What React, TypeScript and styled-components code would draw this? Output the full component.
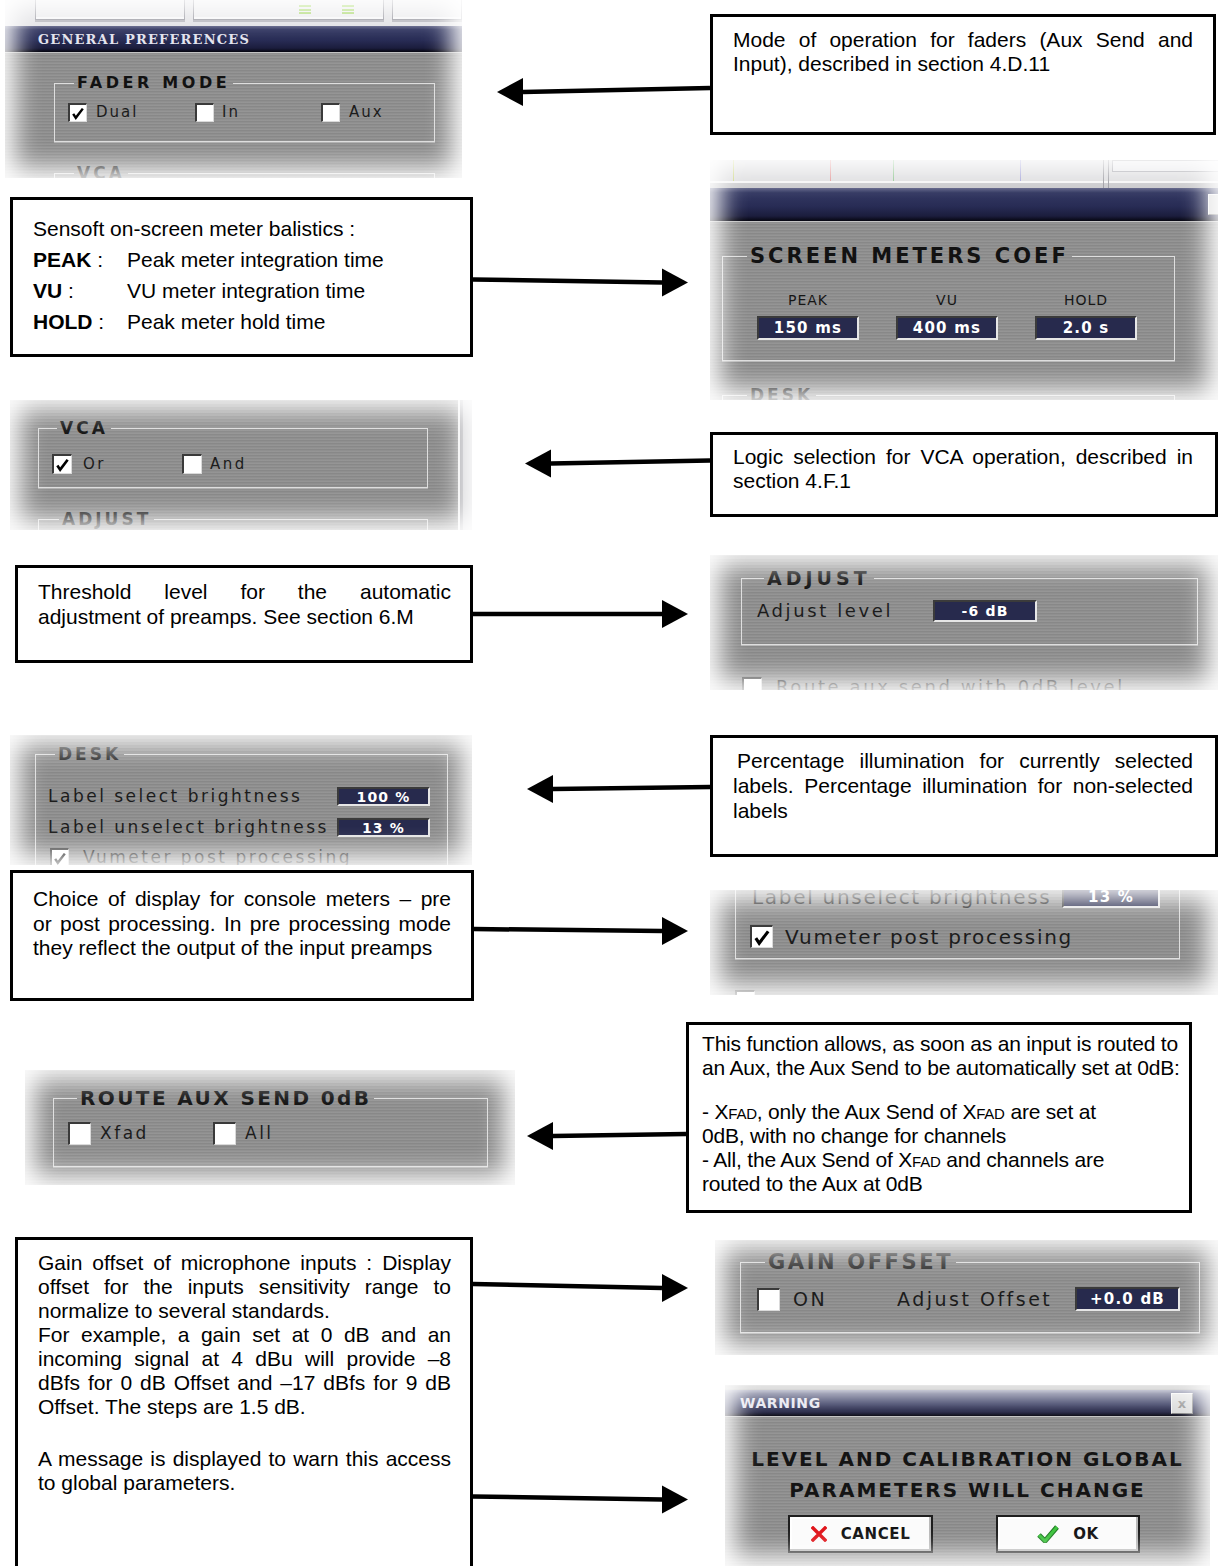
import React from "react";
import styled, { createGlobalStyle } from "styled-components";

const UI = `"DejaVu Sans", "Liberation Sans", sans-serif`;
const DOC = `"Liberation Sans", Arial, sans-serif`;

const GlobalStyle = createGlobalStyle`
  html, body { margin: 0; padding: 0; background: #ffffff; }
  body { font-family: ${DOC}; }
`;

const Page = styled.div`
  width: 1218px;
  height: 1566px;
  overflow: hidden;
  background: #fff;
`;

const Row = styled.div<{ $h: number }>`
  display: flex;
  align-items: flex-start;
  height: ${({ $h }) => $h}px;
  & > * { flex-shrink: 0; }
`;

const Stack = styled.div<{ $w: number; $ml?: number }>`
  display: flex;
  flex-direction: column;
  align-items: flex-start;
  width: ${({ $w }) => $w}px;
  margin-left: ${({ $ml = 0 }) => $ml}px;
  & > * { flex-shrink: 0; }
`;

/* annotation boxes */

const Note = styled.div<{ $w: number; $h: number; $ml?: number; $mt?: number; $pad: string; $lh: number }>`
  box-sizing: border-box;
  width: ${({ $w }) => $w}px;
  height: ${({ $h }) => $h}px;
  margin: ${({ $mt = 0 }) => $mt}px 0 0 ${({ $ml = 0 }) => $ml}px;
  padding: ${({ $pad }) => $pad};
  border: 3px solid #000;
  background: #fff;
  font-family: ${DOC};
  font-size: 21px;
  line-height: ${({ $lh }) => $lh}px;
  color: #000;
`;

const Line = styled.div<{ $justify?: boolean; $indent?: number; $tight?: boolean }>`
  text-align: ${({ $justify }) => ($justify ? "justify" : "left")};
  text-align-last: ${({ $justify }) => ($justify ? "justify" : "auto")};
  white-space: ${({ $justify }) => ($justify ? "normal" : "nowrap")};
  text-indent: ${({ $indent = 0 }) => $indent}px;
  letter-spacing: ${({ $tight }) => ($tight ? "-0.2px" : "normal")};
`;

const Gap = styled.div<{ $h: number }>`
  height: ${({ $h }) => $h}px;
`;

const KeyRow = styled.div`
  display: grid;
  grid-template-columns: 94px 1fr;
  white-space: nowrap;
`;

const Key = styled.span`
  b { font-weight: bold; }
`;

const SmallCaps = styled.span`
  font-variant: small-caps;
`;

/* arrows */

const ArrowSvg = styled.svg<{ $ml?: number; $mt?: number }>`
  display: block;
  margin: ${({ $mt = 0 }) => $mt}px 0 0 ${({ $ml = 0 }) => $ml}px;
  overflow: visible;
`;

function Arrow({ w, dir, tilt = 0, ml, mt }: { w: number; dir: "left" | "right"; tilt?: number; ml?: number; mt?: number }) {
  const c = 17;
  const head = 26;
  const half = 14;
  const tipY = c + tilt / 2;
  const tailY = c - tilt / 2;
  const tipX = dir === "right" ? w : 0;
  const tailX = dir === "right" ? 0 : w;
  const baseX = dir === "right" ? w - head : head;
  return (
    <ArrowSvg width={w} height={34} $ml={ml} $mt={mt}>
      <line x1={tailX} y1={tailY} x2={baseX} y2={tipY} stroke="#000" strokeWidth={4.5} />
      <polygon points={`${tipX},${tipY} ${baseX},${tipY - half} ${baseX},${tipY + half}`} fill="#000" />
    </ArrowSvg>
  );
}

/* screenshot pieces */

const Shot = styled.div<{ $w: number; $h: number; $ml?: number; $mt?: number; $row?: boolean }>`
  position: relative;
  box-sizing: border-box;
  width: ${({ $w }) => $w}px;
  height: ${({ $h }) => $h}px;
  margin: ${({ $mt = 0 }) => $mt}px 0 0 ${({ $ml = 0 }) => $ml}px;
  overflow: hidden;
  display: flex;
  flex-direction: ${({ $row }) => ($row ? "row" : "column")};
  align-items: flex-start;
  background-color: #8f8f8f;
  background-image: repeating-linear-gradient(
    180deg,
    rgba(255, 255, 255, 0.05) 0 1px,
    rgba(0, 0, 0, 0.05) 1px 2px,
    rgba(0, 0, 0, 0) 2px 3px
  );
  font-family: ${UI};
  color: #161616;
  & > * { flex-shrink: 0; }
  &::after {
    content: "";
    position: absolute;
    inset: 0;
    pointer-events: none;
    box-shadow: inset 0 0 26px 10px #fff;
  }
`;

const Pane = styled.div<{ $w: number }>`
  display: flex;
  flex-direction: column;
  align-items: flex-start;
  width: ${({ $w }) => $w}px;
  & > * { flex-shrink: 0; }
`;

const SideStrip = styled.div`
  align-self: stretch;
  width: 14px;
  background: #c9c9cc;
  border-left: 2px solid #f2f2f2;
  box-shadow: inset 3px 0 0 #9d9da2;
`;

const ToolStrip = styled.div<{ $h: number }>`
  align-self: stretch;
  height: ${({ $h }) => $h}px;
  display: flex;
  align-items: flex-start;
  gap: 8px;
  padding-left: 30px;
  background: #e3e3e6;
  box-sizing: border-box;
`;

const StripCell = styled.div<{ $w: number; $pl?: number }>`
  box-sizing: border-box;
  width: ${({ $w }) => $w}px;
  height: 20px;
  display: flex;
  align-items: center;
  gap: 31px;
  padding-left: ${({ $pl = 0 }) => $pl}px;
  border: 1px solid #9c9ca4;
  border-top: none;
  box-shadow: inset 0 -2px 0 #f7f7f9, 0 2px 0 #b7b7bd;
  background: #ececee;
`;

const GreenMark = styled.span`
  width: 12px;
  height: 9px;
  background: linear-gradient(180deg, #a8d86a 0 2px, transparent 2px 4px, #a8d86a 4px 6px, transparent 6px 7px, #a8d86a 7px 9px);
`;

const TitleBar = styled.div<{ $h: number; $mt?: number; $pl?: number; $pr?: number }>`
  align-self: stretch;
  box-sizing: border-box;
  height: ${({ $h }) => $h}px;
  margin-top: ${({ $mt = 0 }) => $mt}px;
  padding: 0 ${({ $pr = 0 }) => $pr}px 0 ${({ $pl = 0 }) => $pl}px;
  display: flex;
  align-items: center;
  justify-content: space-between;
  background: linear-gradient(180deg, #5d6185 0%, #333862 14%, #282c55 55%, #1b1d3d 85%, #060610 100%);
  border-bottom: 1px solid #c4c4c4;
`;

const TitleText = styled.span<{ $serif?: boolean }>`
  font-family: ${({ $serif }) => ($serif ? `"DejaVu Serif", "Liberation Serif", serif` : UI)};
  font-weight: bold;
  font-size: ${({ $serif }) => ($serif ? 13 : 14)}px;
  letter-spacing: ${({ $serif }) => ($serif ? 1.2 : 0.6)}px;
  color: #e4e4ee;
`;

const CloseBtn = styled.span<{ $mr?: number }>`
  width: 20px;
  height: 19px;
  margin-right: ${({ $mr = 0 }) => $mr}px;
  display: flex;
  align-items: center;
  justify-content: center;
  background: #d9d9d9;
  border: 1px solid;
  border-color: #f4f4f4 #7b7b7b #7b7b7b #f4f4f4;
  font: bold 13px ${UI};
  color: #8a8a8a;
`;

const Group = styled.fieldset<{ $w: number; $h: number; $ml?: number; $mt?: number; $pt?: number }>`
  box-sizing: border-box;
  width: ${({ $w }) => $w}px;
  height: ${({ $h }) => $h}px;
  margin: ${({ $mt = 0 }) => $mt}px 0 0 ${({ $ml = 0 }) => $ml}px;
  padding: ${({ $pt = 0 }) => $pt}px 0 0 0;
  min-inline-size: 0;
  border: 1px solid #dedede;
  box-shadow: 0 1px 0 rgba(255, 255, 255, 0.35);
`;

const Legend = styled.legend<{ $size: number; $ls: number; $ml: number; $color?: string }>`
  margin-left: ${({ $ml }) => $ml}px;
  padding: 0 3px;
  font-family: ${UI};
  font-weight: bold;
  font-size: ${({ $size }) => $size}px;
  line-height: ${({ $size }) => $size + 4}px;
  letter-spacing: ${({ $ls }) => $ls}px;
  color: ${({ $color = "#121212" }) => $color};
`;

const Controls = styled.div<{ $mt?: number; $ml?: number; $gap?: number }>`
  display: flex;
  align-items: center;
  margin: ${({ $mt = 0 }) => $mt}px 0 0 ${({ $ml = 0 }) => $ml}px;
  gap: ${({ $gap = 0 }) => $gap}px;
`;

const Option = styled.span<{ $w?: number; $size: number; $ls: number; $gap: number }>`
  display: flex;
  align-items: center;
  width: ${({ $w }) => ($w ? `${$w}px` : "auto")};
  gap: ${({ $gap }) => $gap}px;
  font-size: ${({ $size }) => $size}px;
  letter-spacing: ${({ $ls }) => $ls}px;
  line-height: 1;
  color: #1c1c1c;
  white-space: nowrap;
`;

const CheckBox = styled.span<{ $s: number }>`
  box-sizing: border-box;
  width: ${({ $s }) => $s}px;
  height: ${({ $s }) => $s}px;
  flex-shrink: 0;
  display: inline-flex;
  align-items: center;
  justify-content: center;
  background: #fff;
  border-style: solid;
  border-width: 2px 1px 1px 2px;
  border-color: #3a3a3a #dadada #dadada #3a3a3a;
`;

function Check({ s, on }: { s: number; on?: boolean }) {
  return (
    <CheckBox $s={s}>
      {on && (
        <svg width={s - 5} height={s - 5} viewBox="0 0 16 16">
          <path d="M2.5 9 L5.5 13.5 L13.5 3" fill="none" stroke="#000" strokeWidth="2.8" />
        </svg>
      )}
    </CheckBox>
  );
}

const FieldLabel = styled.span<{ $w: number; $size: number; $ls: number }>`
  width: ${({ $w }) => $w}px;
  font-size: ${({ $size }) => $size}px;
  letter-spacing: ${({ $ls }) => $ls}px;
  line-height: 1;
  white-space: nowrap;
  color: #1c1c1c;
`;

const Value = styled.span<{ $w: number; $h: number; $size?: number }>`
  box-sizing: border-box;
  width: ${({ $w }) => $w}px;
  height: ${({ $h }) => $h}px;
  display: inline-flex;
  align-items: center;
  justify-content: center;
  background: #272a4d;
  color: #fff;
  font-family: ${UI};
  font-weight: bold;
  font-size: ${({ $size = 14 }) => $size}px;
  letter-spacing: 1.2px;
  white-space: pre;
  border-style: solid;
  border-width: 2px 2px 2px 2px;
  border-color: #3b3b3b #e6e6e6 #e6e6e6 #3b3b3b;
`;

const MeterCols = styled.div<{ $mt: number; $ml: number }>`
  display: flex;
  gap: 37px;
  margin: ${({ $mt }) => $mt}px 0 0 ${({ $ml }) => $ml}px;
`;

const MeterCol = styled.div`
  display: flex;
  flex-direction: column;
  align-items: center;
  gap: 8px;
`;

const MeterLabel = styled.span`
  font-size: 14px;
  line-height: 16px;
  letter-spacing: 1px;
  color: #161616;
`;

const Message = styled.div`
  align-self: stretch;
  margin-top: 27px;
  text-align: center;
  font-family: ${UI};
  font-weight: bold;
  font-size: 20px;
  line-height: 31px;
  letter-spacing: 2px;
  color: #141414;
`;

const Buttons = styled.div`
  display: flex;
  gap: 63px;
  margin: 9px 0 0 63px;
`;

const Button = styled.button<{ $w: number }>`
  box-sizing: border-box;
  width: ${({ $w }) => $w}px;
  height: 38px;
  padding: 0;
  display: flex;
  align-items: center;
  justify-content: center;
  gap: 14px;
  background: #fbfbfb;
  border: 2px solid #1e1e1e;
  box-shadow: inset -2px -2px 0 #b9b9b9, inset 2px 2px 0 #ffffff;
  font-family: ${UI};
  font-weight: bold;
  font-size: 15px;
  letter-spacing: 0.6px;
  color: #111;
`;

function MeterStrip() {
  return (
    <svg width={508} height={28} style={{ display: "block", flexShrink: 0 }}>
      <rect x={0} y={0} width={508} height={28} fill="#dcdcde" />
      <rect x={0} y={21} width={508} height={2} fill="#f6f6f6" />
      <rect x={0} y={23} width={508} height={5} fill="#c9c9cc" />
      <line x1={23.5} y1={0} x2={23.5} y2={21} stroke="#c9d27a" />
      <line x1={120.5} y1={0} x2={120.5} y2={21} stroke="#e29696" />
      <line x1={183.5} y1={0} x2={183.5} y2={21} stroke="#8dc48d" />
      <line x1={310.5} y1={0} x2={310.5} y2={21} stroke="#a3a3d8" />
      <line x1={393.5} y1={0} x2={393.5} y2={28} stroke="#9a9aa0" />
      <line x1={398.5} y1={0} x2={398.5} y2={28} stroke="#9a9aa0" />
      <rect x={402.5} y={0.5} width={110} height={11} fill="#e9e9ec" stroke="#a6a6ac" />
    </svg>
  );
}

export default function App() {
  return (
    <Page>
      <GlobalStyle />

      <Row $h={160}>
        <Shot $w={457} $h={178} $ml={5}>
          <ToolStrip $h={26}>
            <StripCell $w={150} />
            <StripCell $w={192} $pl={105}>
              <GreenMark />
              <GreenMark />
            </StripCell>
            <StripCell $w={70} />
          </ToolStrip>
          <TitleBar $h={27} $pl={33}>
            <TitleText $serif>GENERAL PREFERENCES</TitleText>
          </TitleBar>
          <Group $w={381} $h={69} $ml={49} $mt={20} $pt={10}>
            <Legend $size={16} $ls={3.6} $ml={19}>FADER MODE</Legend>
            <Controls $ml={13}>
              <Option $w={127} $size={15} $ls={2} $gap={9}>
                <Check s={19} on />
                Dual
              </Option>
              <Option $w={126} $size={15} $ls={2} $gap={8}>
                <Check s={19} />
                In
              </Option>
              <Option $size={15} $ls={2} $gap={9}>
                <Check s={19} />
                Aux
              </Option>
            </Controls>
          </Group>
          <Group $w={381} $h={60} $ml={49} $mt={21}>
            <Legend $size={17} $ls={3} $ml={19}>VCA</Legend>
          </Group>
        </Shot>
        <Arrow w={213} dir="left" tilt={4} ml={35} mt={73} />
        <Note $w={506} $h={121} $mt={14} $pad="11px 20px 0" $lh={24}>
          <Line $justify>Mode of operation for faders (Aux Send and</Line>
          <Line>Input), described in section 4.D.11</Line>
        </Note>
      </Row>

      <Row $h={240}>
        <Note $w={463} $h={160} $ml={10} $mt={37} $pad="13px 20px 0" $lh={31}>
          <Line>Sensoft on-screen meter balistics :</Line>
          <KeyRow>
            <Key><b>PEAK</b> :</Key>
            <span>Peak meter integration time</span>
          </KeyRow>
          <KeyRow>
            <Key><b>VU</b> :</Key>
            <span>VU meter integration time</span>
          </KeyRow>
          <KeyRow>
            <Key><b>HOLD</b> :</Key>
            <span>Peak meter hold time</span>
          </KeyRow>
        </Note>
        <Arrow w={215} dir="right" tilt={3} mt={104} />
        <Shot $w={508} $h={240} $ml={22}>
          <MeterStrip />
          <TitleBar $h={34}>
            <span />
            <CloseBtn $mr={-12} />
          </TitleBar>
          <Group $w={453} $h={117} $ml={12} $mt={22}>
            <Legend $size={21} $ls={3} $ml={24}>SCREEN METERS COEF</Legend>
            <MeterCols $mt={23} $ml={34}>
              <MeterCol>
                <MeterLabel>PEAK</MeterLabel>
                <Value $w={102} $h={24} $size={15}>150 ms</Value>
              </MeterCol>
              <MeterCol>
                <MeterLabel>VU</MeterLabel>
                <Value $w={102} $h={24} $size={15}>400 ms</Value>
              </MeterCol>
              <MeterCol>
                <MeterLabel>HOLD</MeterLabel>
                <Value $w={102} $h={24} $size={15}>2.0 s</Value>
              </MeterCol>
            </MeterCols>
          </Group>
          <Group $w={453} $h={60} $ml={12} $mt={24}>
            <Legend $size={17} $ls={3} $ml={24}>DESK</Legend>
          </Group>
        </Shot>
      </Row>

      <Row $h={150}>
        <Shot $w={462} $h={130} $ml={10} $row>
          <Pane $w={448}>
            <Group $w={390} $h={70} $ml={28} $mt={18} $pt={15}>
              <Legend $size={17} $ls={3} $ml={18}>VCA</Legend>
              <Controls $ml={13}>
                <Option $w={130} $size={15} $ls={2.5} $gap={11}>
                  <Check s={20} on />
                  Or
                </Option>
                <Option $size={15} $ls={2.5} $gap={8}>
                  <Check s={20} />
                  And
                </Option>
              </Controls>
            </Group>
            <Group $w={390} $h={60} $ml={28} $mt={21}>
              <Legend $size={17} $ls={3} $ml={20}>ADJUST</Legend>
            </Group>
          </Pane>
          <SideStrip />
        </Shot>
        <Arrow w={185} dir="left" tilt={3} ml={53} mt={45} />
        <Note $w={508} $h={85} $mt={32} $pad="10px 22px 0 20px" $lh={24}>
          <Line $justify>Logic selection for VCA operation, described in</Line>
          <Line>section 4.F.1</Line>
        </Note>
      </Row>

      <Row $h={180}>
        <Note $w={458} $h={98} $ml={15} $mt={15} $pad="11px 19px 0 20px" $lh={25}>
          <Line $justify>Threshold level for the automatic</Line>
          <Line>adjustment of preamps. See section 6.M</Line>
        </Note>
        <Arrow w={215} dir="right" mt={47} />
        <Shot $w={508} $h={135} $ml={22} $mt={5}>
          <Group $w={457} $h={78} $ml={31} $mt={12} $pt={10}>
            <Legend $size={19} $ls={4} $ml={22}>ADJUST</Legend>
            <Controls $ml={15}>
              <FieldLabel $w={176} $size={18} $ls={2.6}>Adjust level</FieldLabel>
              <Value $w={104} $h={22}>-6 dB</Value>
            </Controls>
          </Group>
          <Controls $mt={32} $ml={32} $gap={14}>
            <Check s={20} />
            <FieldLabel $w={400} $size={18} $ls={2.6}>Route aux send with 0dB level</FieldLabel>
          </Controls>
        </Shot>
      </Row>

      <Row $h={135}>
        <Shot $w={462} $h={130} $ml={10} $mt={5}>
          <Group $w={413} $h={150} $ml={25} $mt={9} $pt={22}>
            <Legend $size={17} $ls={3} $ml={19} $color="#2c2c2c">DESK</Legend>
            <Controls $ml={12}>
              <FieldLabel $w={289} $size={17} $ls={2.5}>Label select brightness</FieldLabel>
              <Value $w={93} $h={19}>100 %</Value>
            </Controls>
            <Controls $ml={12} $mt={12}>
              <FieldLabel $w={289} $size={17} $ls={2.5}>Label unselect brightness</FieldLabel>
              <Value $w={93} $h={19}>13 %</Value>
            </Controls>
            <Controls $ml={14} $mt={11} $gap={14}>
              <Check s={19} on />
              <FieldLabel $w={300} $size={17} $ls={2.5}>Vumeter post processing</FieldLabel>
            </Controls>
          </Group>
        </Shot>
        <Arrow w={183} dir="left" tilt={2} ml={55} mt={41} />
        <Note $w={508} $h={122} $mt={5} $pad="10px 22px 0 20px" $lh={25}>
          <Line $justify $indent={4}>Percentage illumination for currently selected</Line>
          <Line $justify>labels. Percentage illumination for non-selected</Line>
          <Line>labels</Line>
        </Note>
      </Row>

      <Row $h={155}>
        <Note $w={464} $h={131} $ml={10} $mt={5} $pad="14px 20px 0" $lh={24.5}>
          <Line $justify>Choice of display for console meters – pre</Line>
          <Line $justify>or post processing. In pre processing mode</Line>
          <Line>they reflect the output of the input preamps</Line>
        </Note>
        <Arrow w={214} dir="right" tilt={2} mt={48} />
        <Shot $w={508} $h={105} $ml={22} $mt={25}>
          <Group $w={445} $h={109} $ml={25} $mt={-40} $pt={35}>
            <Controls $ml={16}>
              <FieldLabel $w={310} $size={20} $ls={1.7}>Label unselect brightness</FieldLabel>
              <Value $w={98} $h={22} $size={15}>13 %</Value>
            </Controls>
            <Controls $ml={14} $mt={17} $gap={12}>
              <Check s={23} on />
              <FieldLabel $w={320} $size={20} $ls={1.7}>Vumeter post processing</FieldLabel>
            </Controls>
          </Group>
          <Controls $ml={25} $mt={31}>
            <Check s={20} />
          </Controls>
        </Shot>
      </Row>

      <Row $h={215}>
        <Shot $w={490} $h={115} $ml={25} $mt={50}>
          <Group $w={435} $h={81} $ml={28} $mt={16} $pt={12}>
            <Legend $size={20} $ls={2.4} $ml={23}>ROUTE AUX SEND 0dB</Legend>
            <Controls $ml={14}>
              <Option $w={145} $size={17} $ls={2.5} $gap={9}>
                <Check s={23} />
                Xfad
              </Option>
              <Option $size={17} $ls={2.5} $gap={9}>
                <Check s={23} />
                All
              </Option>
            </Controls>
          </Group>
        </Shot>
        <Arrow w={159} dir="left" tilt={2} ml={12} mt={98} />
        <Note $w={506} $h={191} $mt={2} $pad="7px 0 0 13px" $lh={24}>
          <Line $tight>This function allows, as soon as an input is routed to</Line>
          <Line $tight>an Aux, the Aux Send to be automatically set at 0dB:</Line>
          <Gap $h={20} />
          <Line $tight>- <SmallCaps>Xfad</SmallCaps>, only the Aux Send of <SmallCaps>Xfad</SmallCaps> are set at</Line>
          <Line $tight>0dB, with no change for channels</Line>
          <Line $tight>- All, the Aux Send of <SmallCaps>Xfad</SmallCaps> and channels are</Line>
          <Line $tight>routed to the Aux at 0dB</Line>
        </Note>
      </Row>

      <Row $h={331}>
        <Note $w={458} $h={340} $ml={15} $mt={2} $pad="11px 19px 0 20px" $lh={24}>
          <Line $justify>Gain offset of microphone inputs : Display</Line>
          <Line $justify>offset for the inputs sensitivity range to</Line>
          <Line>normalize to several standards.</Line>
          <Line $justify>For example, a gain set at 0 dB and an</Line>
          <Line $justify>incoming signal at 4 dBu will provide –8</Line>
          <Line $justify>dBfs for 0 dB Offset and –17 dBfs for 9 dB</Line>
          <Line>Offset. The steps are 1.5 dB.</Line>
          <Gap $h={28} />
          <Line $justify>A message is displayed to warn this access</Line>
          <Line>to global parameters.</Line>
        </Note>
        <Stack $w={215}>
          <Arrow w={215} dir="right" tilt={4} mt={34} />
          <Arrow w={215} dir="right" tilt={3} mt={178} />
        </Stack>
        <Stack $w={508} $ml={22}>
          <Shot $w={503} $h={115} $ml={5} $mt={5}>
            <Group $w={460} $h={83} $ml={25} $mt={10} $pt={12}>
              <Legend $size={21} $ls={2.6} $ml={24} $color="#363636">GAIN OFFSET</Legend>
              <Controls $ml={16}>
                <Option $w={140} $size={19} $ls={2.5} $gap={13}>
                  <Check s={23} />
                  ON
                </Option>
                <FieldLabel $w={178} $size={19} $ls={2.5}>Adjust Offset</FieldLabel>
                <Value $w={105} $h={24} $size={15}>+0.0 dB</Value>
              </Controls>
            </Group>
          </Shot>
          <Shot $w={485} $h={181} $ml={15} $mt={30}>
            <TitleBar $h={27} $mt={5} $pl={15} $pr={17}>
              <TitleText>WARNING</TitleText>
              <CloseBtn>x</CloseBtn>
            </TitleBar>
            <Message>
              LEVEL AND CALIBRATION GLOBAL
              <br />
              PARAMETERS WILL CHANGE
            </Message>
            <Buttons>
              <Button $w={145}>
                <svg width={16} height={16} viewBox="0 0 16 16">
                  <path d="M2 2 L14 14 M14 2 L2 14" stroke="#e0141a" strokeWidth={3.4} strokeLinecap="square" />
                </svg>
                CANCEL
              </Button>
              <Button $w={144}>
                <svg width={22} height={18} viewBox="0 0 22 18">
                  <path d="M2 10 L8 16 L20 2" fill="none" stroke="#1f7a22" strokeWidth={5} strokeLinejoin="round" />
                  <path d="M2 10 L8 16 L20 2" fill="none" stroke="#3ec43e" strokeWidth={3} strokeLinejoin="round" />
                </svg>
                OK
              </Button>
            </Buttons>
          </Shot>
        </Stack>
      </Row>
    </Page>
  );
}
